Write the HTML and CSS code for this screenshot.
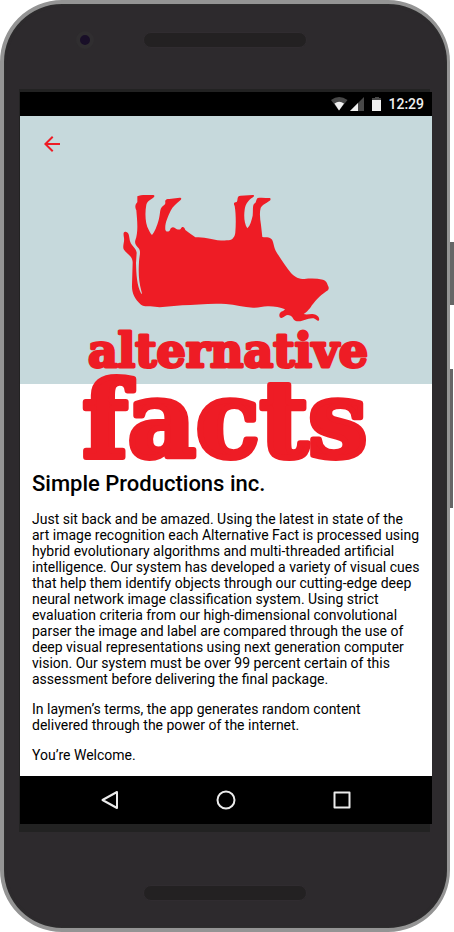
FILE: index.html
```html
<!DOCTYPE html>
<html lang="en">
<head>
<meta charset="utf-8">
<meta name="viewport" content="width=device-width, initial-scale=1">
<title>Alternative Facts</title>
<link rel="stylesheet" href="styles.css">
</head>
<body>
<div class="phone">
  <span class="side-button power"></span>
  <span class="side-button volume"></span>
  <div class="bezel-top">
    <span class="camera"></span>
    <span class="speaker"></span>
  </div>
  <div class="screen">
    <div class="status">
      <svg width="56" height="24" viewBox="0 0 56 24" aria-hidden="true">
        <path d="M5 8Q13 2 21.500 8L13 18.500Z" fill="#484848"/>
        <path d="M8.500 11.500Q13 8 18 11.500L13 18.500Z" fill="#f0f0f0"/>
        <path d="M24 19L38 5V19Z" fill="#484848"/>
        <path d="M24 19L32 11V19Z" fill="#f0f0f0"/>
        <path d="M46 8V6H49V5H53V6H55V8Z" fill="#484848"/>
        <path d="M46 8H55V19H46Z" fill="#f0f0f0"/>
      </svg>
      <span class="clock">12:29</span>
    </div>
    <main class="page">
      <header class="toolbar">
        <button class="back" type="button" aria-label="Back">
          <svg width="24" height="24" viewBox="0 0 24 24"><path d="M20 11H7.830l5.590-5.590L12 4l-8 8 8 8 1.410-1.410L7.830 13H20v-2z" fill="#ee1c25"/></svg>
        </button>
      </header>
      <svg class="logo" viewBox="20 188 412 280" role="img" aria-label="alternative facts">
        <g transform="translate(110 180) scale(.33333)">
          <path d="M82 49C92 43 114 46 128 45C132 45 135 47 132 51C124 59 113 61 109 74C104 100 106 133 116 149C119 155 122 161 126 165C134 156 141 138 146 120C151 102 149 91 154 83C159 76 167 75 166 68C164 59 169 57 178 57L209 53C215 53 215 57 211 61C199 72 188 80 182 92C174 109 164 130 166 149C168 157 177 156 180 150C182 142 189 139 195 144C201 149 208 150 212 147C216 138 223 140 226 150C236 159 249 165 256 172C272 170 286 174 300 176C320 181 338 182 356 181C369 180 375 169 376 157C378 131 378 101 374 78C369 68 373 67 380 66C385 59 379 48 392 47L428 45C434 45 433 49 429 52C415 60 406 73 404 89C401 109 403 132 412 145C421 137 424 123 428 107C430 92 427 78 432 72C440 67 437 60 443 54C454 52 467 54 480 54C483 57 482 60 478 63C468 70 456 75 452 84C448 99 450 116 453 135L457 171C467 173 476 169 484 177C491 183 490 197 497 212C511 236 528 260 543 279C555 292 567 297 583 297C601 295 621 295 639 299C649 302 651 309 654 317C659 325 655 330 649 334C627 349 614 365 601 383C593 392 589 397 581 402C592 406 605 399 617 404C626 408 629 415 627 421C623 426 619 418 611 415C593 413 582 424 566 424C548 424 551 412 542 407C528 401 528 409 515 414C508 415 506 404 510 399C514 393 521 395 525 388C512 382 493 379 477 379C458 378 448 384 429 383C401 382 376 374 348 372C303 369 258 374 217 376C185 378 154 385 121 379C110 378 100 380 93 374C73 356 65 339 66 314L68 247C68 228 51 223 42 209C36 200 44 188 42 174C40 162 39 154 47 155C59 156 57 174 61 186C65 198 79 205 80 218L78 250C79 281 80 316 94 342C96 341 96 338 94 333C86 304 85 277 87 245C89 222 93 214 86 205C79 197 73 190 76 181C86 154 81 117 79 91C72 76 79 71 82 66Z" fill="#ee1c25"/>
        </g>
        <text class="brand-small" x="228" y="367" text-anchor="middle">alternative</text>
        <text class="brand-big" x="225" y="457" text-anchor="middle">facts</text>
      </svg>
      <article class="about">
        <h1>Simple Productions inc.</h1>
        <p>Just sit back and be amazed. Using the latest in state of the art image recognition each Alternative Fact is processed using hybrid evolutionary algorithms and multi-threaded artificial intelligence. Our system has developed a variety of visual cues that help them identify objects through our cutting-edge deep neural network image classification system. Using strict evaluation criteria from our high-dimensional convolutional parser the image and label are compared through the use of deep visual representations using next generation computer vision. Our system must be over 99 percent certain of this assessment before delivering the final package.</p>
        <p>In laymen’s terms, the app generates random content delivered through the power of the internet.</p>
        <p>You’re Welcome.</p>
      </article>
    </main>
    <nav class="navbar">
      <button type="button" aria-label="Back"><svg width="24" height="24" viewBox="0 0 24 24"><path d="M4.500 12L19 4V20Z"/></svg></button>
      <button type="button" aria-label="Home"><svg width="24" height="24" viewBox="0 0 24 24"><circle cx="12" cy="12" r="8.500"/></svg></button>
      <button type="button" aria-label="Recent apps"><svg width="24" height="24" viewBox="0 0 24 24"><path d="M4.500 4.500H19.500V19.500H4.500Z"/></svg></button>
    </nav>
  </div>
  <div class="bezel-bottom"><span class="speaker"></span></div>
</div>
</body>
</html>
```
FILE: styles.css
```css
* { box-sizing: border-box; }
body {
  margin: 0;
  padding-right: 4px;
  background: #fff;
  color: #000;
  font-family: Roboto, "Liberation Sans", sans-serif;
}
button {
  display: flex;
  padding: 0;
  border: 0;
  background: none;
}
.phone {
  position: relative;
  min-height: 100vh;
  display: flex;
  flex-direction: column;
  padding: 0 15px 0 16px;
  background: #2d2a2d;
  border: 4px solid #949494;
  border-right-width: 3px;
  border-radius: 62px;
  box-shadow: inset 0 0 3px #303330;
}
.side-button {
  position: absolute;
  left: 100%;
  margin-left: 3px;
  width: 4px;
  background: #666;
}
.power { top: 238px; height: 63px; }
.volume { top: 365px; width: 3px; height: 139px; }
.bezel-top,
.bezel-bottom {
  display: flex;
  justify-content: center;
  padding-right: 2px;
}
.bezel-top {
  position: relative;
  height: 88px;
  padding-top: 28px;
}
.bezel-bottom {
  height: 104px;
  padding-top: 61px;
}
.camera {
  position: absolute;
  left: 56px;
  top: 27px;
  width: 18px;
  height: 18px;
  border: 4px solid #302e30;
  border-radius: 50%;
  background: #190f28;
}
.speaker {
  width: 164px;
  height: 16px;
  border: 1px solid #302c30;
  border-radius: 8px;
  background: #232122;
}
.screen {
  position: relative;
  z-index: 0;
  flex: 1;
  display: flex;
  flex-direction: column;
}
.screen::before {
  content: "";
  position: absolute;
  z-index: -1;
  inset: -3px 2px -8px -1px;
  background: #222;
}
.status {
  display: flex;
  align-items: center;
  justify-content: flex-end;
  gap: 6px;
  height: 24px;
  padding-right: 8px;
  background: #000;
}
.clock {
  color: #f0f0f0;
  font-size: 14px;
  font-weight: 500;
  line-height: 24px;
}
.page {
  flex: 1;
  background: linear-gradient(#c6d9dc 268px, #fff 268px);
}
.toolbar {
  display: flex;
  align-items: center;
  height: 56px;
  padding: 0 20px;
}
.logo {
  display: block;
  width: 100%;
  max-width: 412px;
  margin: 16px auto 0;
  overflow: visible;
}
.logo text {
  font-family: "DejaVu Serif", serif;
  font-weight: bold;
  fill: #ee1c25;
  stroke: #ee1c25;
  stroke-linejoin: round;
}
.brand-small { font-size: 46px; stroke-width: 3px; }
.brand-big { font-size: 105px; stroke-width: 6px; }
.about { padding: 0 12px 12px; }
h1 {
  margin: 0 0 12px;
  padding-top: 1px;
  font-size: 22px;
  font-weight: 500;
  line-height: 30px;
}
p {
  margin: 0 0 14px;
  font-size: 14px;
  line-height: 16px;
}
p:last-child { margin: 0; }
.navbar {
  display: flex;
  align-items: center;
  justify-content: center;
  gap: 92px;
  height: 48px;
  background: #000;
}
.navbar svg {
  fill: none;
  stroke: #ececec;
  stroke-width: 2px;
  stroke-linejoin: round;
}
```
